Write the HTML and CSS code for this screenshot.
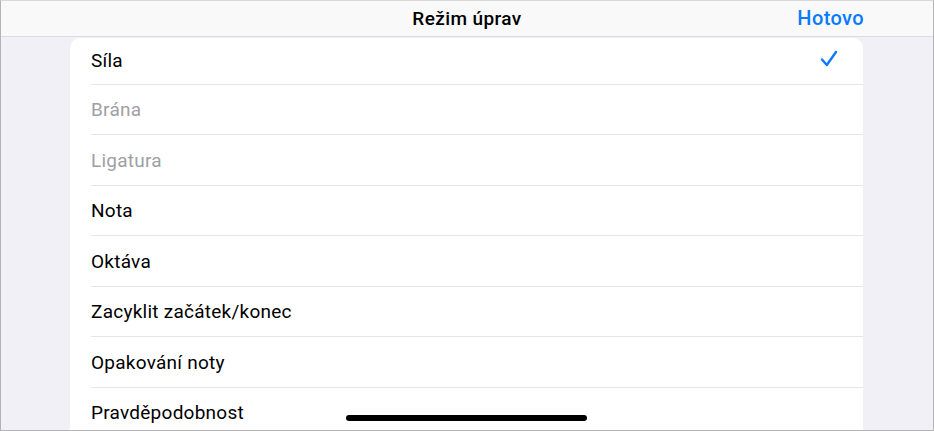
FILE: index.html
```html
<!DOCTYPE html>
<html lang="cs">
<head>
<meta charset="utf-8">
<link rel="stylesheet" href="styles.css">
</head>
<body>
<div class="screen">
  <header class="navbar">
    <div class="title">Režim úprav</div>
    <div class="done">Hotovo</div>
  </header>
  <div class="content">
    <ul class="list">
      <li class="row first"><span>Síla</span>
        <svg class="check" width="18" height="18" viewBox="0 0 18 18"><path d="M2 9.5 L6.8 15 L16 2" fill="none" stroke="#0a7aff" stroke-width="2.4" stroke-linecap="round" stroke-linejoin="round"/></svg>
      </li>
      <li class="row disabled"><span>Brána</span></li>
      <li class="row disabled"><span>Ligatura</span></li>
      <li class="row"><span>Nota</span></li>
      <li class="row"><span>Oktáva</span></li>
      <li class="row"><span>Zacyklit začátek/konec</span></li>
      <li class="row"><span>Opakování noty</span></li>
      <li class="row"><span>Pravděpodobnost</span></li>
    </ul>
  </div>
  <div class="home-indicator"></div>
</div>
</body>
</html>
```
FILE: styles.css
```css
* { box-sizing: border-box; }
html, body { margin: 0; padding: 0; }
body {
  font-family: Roboto, "Liberation Sans", Arial, sans-serif;
  background: #ffffff;
}
.screen {
  position: relative;
  width: 934px;
  height: 431px;
  border: 1px solid #b4b4b4;
  border-top-color: #d8d8d8;
  background: #f1f0f6;
  overflow: hidden;
  display: flex;
  flex-direction: column;
}
.navbar {
  position: relative;
  height: 36px;
  flex: none;
  background: #f9f9f9;
  border-bottom: 1px solid #dcdcdc;
  display: flex;
  align-items: center;
  justify-content: center;
}
.title {
  font-size: 19px;
  font-weight: 500;
  color: #000;
  letter-spacing: 0.4px;
}
.done {
  position: absolute;
  right: 69px;
  top: 0;
  height: 35px;
  line-height: 35px;
  font-size: 20px;
  font-weight: 500;
  color: #0a7aff;
  letter-spacing: 0.4px;
}
.content {
  flex: 1;
  padding: 1px 70px 0 69px;
}
.list {
  list-style: none;
  margin: 0;
  padding: 0;
  background: #ffffff;
  border-radius: 10px 10px 0 0;
  height: 100%;
}
.row {
  height: 50.5px;
  margin-left: 21px;
  padding-right: 25px;
  border-bottom: 1px solid #e6e6ea;
  display: flex;
  align-items: center;
  justify-content: space-between;
  font-size: 19px;
  letter-spacing: 0.25px;
  color: #000;
}
.row.first { height: 46.5px; padding-bottom: 2px; }
.row.disabled { color: #a0a0a4; }
.row span { padding-top: 1px; }
.check { margin-top: -2px; }
.home-indicator {
  position: absolute;
  left: 345px;
  top: 414px;
  width: 241px;
  height: 6px;
  border-radius: 3px;
  background: #000;
}
```
